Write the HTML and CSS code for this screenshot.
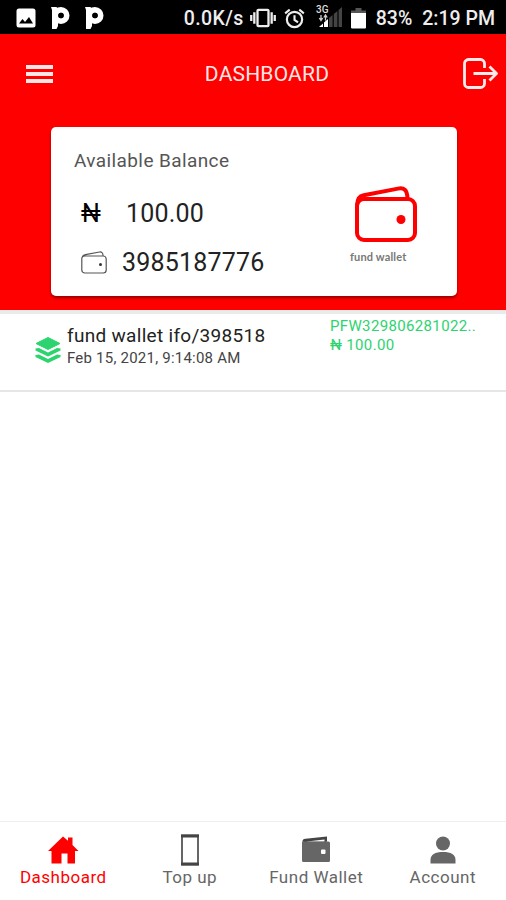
FILE: index.html
```
<!DOCTYPE html>
<html lang="en">
<head>
  <meta charset="UTF-8">
  <meta name="viewport" content="width=device-width, initial-scale=1.0">
  <title>Dashboard</title>
  <link rel="stylesheet" href="styles.css">
</head>
<body>
  <div class="app">
    <div class="status-bar">
      <svg class="icon-image" width="20" height="20" viewBox="0 0 20 20">
        <rect x="0.5" y="0.5" width="19" height="19" rx="2.5" fill="#fff"/>
        <path d="M3 15.500l3.500-4.500 2.500 3 4-5 4 6.500z" fill="#000"/>
      </svg>
      <svg class="icon-p" width="19" height="24" viewBox="0 0 19 24">
        <path d="M0 1h5.500l1.500 2v17l-1.500 3H1V4z" fill="#fff"/>
        <circle cx="10" cy="9.500" r="5.600" fill="none" stroke="#fff" stroke-width="5.800"/>
        <circle cx="10" cy="9.500" r="2.700" fill="#000"/>
      </svg>
      <svg class="icon-p" width="19" height="24" viewBox="0 0 19 24">
        <path d="M0 1h5.500l1.500 2v17l-1.500 3H1V4z" fill="#fff"/>
        <circle cx="10" cy="9.500" r="5.600" fill="none" stroke="#fff" stroke-width="5.800"/>
        <circle cx="10" cy="9.500" r="2.700" fill="#000"/>
      </svg>
      <span class="speed">0.0K/s</span>
      <svg class="icon-vibrate" width="26" height="20" viewBox="0 0 27 20">
        <rect x="7.800" y="1.500" width="11.400" height="17" rx="1" fill="none" stroke="#eee" stroke-width="2.400"/>
        <path d="M4.500 4v12M22.500 4v12M1.300 7v6M25.700 7v6" stroke="#eee" stroke-width="2.400"/>
      </svg>
      <svg class="icon-alarm" width="21" height="21" viewBox="0 0 22 22">
        <circle cx="11" cy="12" r="8" fill="none" stroke="#eee" stroke-width="2.300"/>
        <path d="M1.200 5.600L6 1.700M20.800 5.600L16 1.700M11 7.500v5l3.700 2.500" fill="none" stroke="#eee" stroke-width="2.200"/>
      </svg>
      <svg class="icon-signal" width="27" height="24" viewBox="0 0 27 24">
        <path d="M3 23l4-3.500V23z" fill="#fff"/>
        <path d="M8 18.500l4-3.500v8H8z" fill="#fff"/>
        <path d="M13 14l3.600-3v12H13zM17.800 10l3.600-3v16h-3.600zM22.600 6L26 3v20h-3.400z" fill="#444"/>
        <path d="M5 11v5M3.300 14L5 16.500 6.700 14M9.500 16.500v-5M7.800 13.500l1.700-2.500 1.700 2.500" fill="none" stroke="#ccc" stroke-width="1.300"/>
        <text x="0" y="8.500" class="network">3G</text>
      </svg>
      <svg class="icon-battery" width="15" height="21" viewBox="0 0 15 21">
        <path d="M4.500 0h6v2.500H15V5H0V2.500h4.500z" fill="#555"/>
        <path d="M0 5h15v14.500a1 1 0 0 1-1 1H1a1 1 0 0 1-1-1z" fill="#fff"/>
      </svg>
      <span class="percent">83%</span>
      <span class="time">2:19 PM</span>
    </div>

    <div class="header">
      <div class="toolbar">
        <svg class="icon-menu" width="27" height="20" viewBox="0 0 27 20">
          <path d="M0 3h27M0 10h27M0 17h27" stroke="#fff" stroke-opacity=".9" stroke-width="4"/>
        </svg>
        <h1 class="title">DASHBOARD</h1>
        <svg class="icon-logout" width="35" height="31" viewBox="0 0 35 31">
          <path d="M21.500 10V5.500a4 4 0 0 0-4-4h-12a4 4 0 0 0-4 4v20a4 4 0 0 0 4 4h12a4 4 0 0 0 4-4V21M10.500 15.500h22M26.500 8.500l7 7-7 7" fill="none" stroke="#fff" stroke-opacity=".92" stroke-width="2.800" stroke-linejoin="round"/>
        </svg>
      </div>

      <div class="card">
        <div class="balance">
          <div class="label">Available Balance</div>
          <div class="amount"><span class="naira">₦</span>100.00</div>
          <div class="account">
            <svg width="26" height="23" viewBox="0 0 26 23">
              <path d="M.8 8.500V19a3 3 0 0 0 3 3h18.400a3 3 0 0 0 3-3V8a3 3 0 0 0-3-3H4a3 3 0 0 0-3.200 3.500zM1.200 6.500C1.500 4.500 3 4 4.500 3.600L18.500 1c2-.3 3.500.8 3.600 3.800" fill="none" stroke="#555" stroke-width="1.200"/>
              <circle cx="19.500" cy="13.500" r="1.500" fill="#333"/>
            </svg>
            3985187776
          </div>
        </div>
        <div class="fund">
          <svg width="62" height="56" viewBox="0 0 62 56">
            <rect x="2" y="13" width="58" height="41" rx="7" fill="none" stroke="#f00" stroke-width="4"/>
            <path d="M2.200 19c0-6 1.500-8.800 6.500-9.700L43 2.600c6-1.200 9 1.200 9.500 9.400" fill="none" stroke="#f00" stroke-width="4"/>
            <circle cx="46" cy="33.500" r="4.500" fill="#f00"/>
          </svg>
          <div class="fund-label">fund wallet</div>
        </div>
      </div>
    </div>

    <div class="transaction">
      <svg class="icon-layers" width="26" height="26" viewBox="0 0 26 26">
        <path d="M13 0.500L25 6.500 13 12.500 1 6.500z" fill="#2dd36f" stroke="#2dd36f" stroke-linejoin="round"/>
        <path d="M.5 11.500l3.500-.6 9 4.500 9-4.500 3.500.6v2l-12.500 6-12.500-6zM.5 18l3.500-.6 9 4.500 9-4.500 3.500.6v2L13 26 .5 20z" fill="#2dd36f"/>
      </svg>
      <div class="details">
        <div class="name">fund wallet ifo/398518</div>
        <div class="date">Feb 15, 2021, 9:14:08 AM</div>
      </div>
      <div class="payment">
        <div class="reference">PFW329806281022..</div>
        <div class="price">₦ 100.00</div>
      </div>
    </div>

    <div class="tabs">
      <a class="tab active" href="#dashboard">
        <svg width="32" height="32" viewBox="0 0 32 32">
          <path d="M16 2.500l5 4.200V3.500h4.500v7.500L31.500 17H28v12.500h-7.500v-10h-6v10H4.500V17H1z" fill="currentColor"/>
        </svg>
        <span>Dashboard</span>
      </a>
      <a class="tab" href="#topup">
        <svg width="32" height="32" viewBox="0 0 32 32">
          <rect x="8" y="1.500" width="16" height="29" fill="none" stroke="#666" stroke-width="2"/>
          <path d="M7 2h18M7 30h18" stroke="#444" stroke-width="3"/>
        </svg>
        <span>Top up</span>
      </a>
      <a class="tab" href="#fund">
        <svg width="32" height="32" viewBox="0 0 32 32">
          <path d="M2.500 7.500c0-2 1-2.500 3-2.700L27 2.500v4.700L26 8H4z" fill="#444"/>
          <path d="M7 7.500L24.500 5.500V7.800H7z" fill="#fff"/>
          <path d="M2 7.500h26.500A1.500 1.500 0 0 1 30 9v17.500a1.500 1.500 0 0 1-1.500 1.500h-25A1.500 1.500 0 0 1 2 26.500z" fill="currentColor"/>
          <rect x="21" y="15.500" width="4.500" height="4.500" rx="1" fill="#fff"/>
        </svg>
        <span>Fund Wallet</span>
      </a>
      <a class="tab" href="#account">
        <svg width="32" height="32" viewBox="0 0 32 32">
          <circle cx="16" cy="9.500" r="7" fill="currentColor"/>
          <path d="M3.500 29.500V26C3.500 20.500 8 18 16 18s12.500 2.500 12.500 8v3.500z" fill="currentColor"/>
        </svg>
        <span>Account</span>
      </a>
    </div>
  </div>
</body>
</html>
```
FILE: styles.css
```
body {
  margin: 0;
  font-family: Roboto, "Liberation Sans", sans-serif;
  color: #222;
  background: #fff;
}

svg {
  display: block;
  flex: none;
}

.app {
  display: flex;
  flex-direction: column;
  height: 900px;
  overflow: hidden;
}

/* status bar */
.status-bar {
  display: flex;
  align-items: center;
  height: 34px;
  padding: 2px 11px 0 16px;
  box-sizing: border-box;
  background: #000;
  color: #eee;
  font-size: 19.5px;
  font-weight: 500;
  white-space: nowrap;
}

.icon-p {
  margin-left: 15px;
}

.speed {
  margin-left: auto;
  letter-spacing: .4px;
}

.icon-vibrate {
  margin-left: 6px;
}

.icon-alarm {
  margin-left: 8px;
}

.icon-signal {
  margin: -5px 0 0 11px;
}

.network {
  font-size: 10px;
  fill: #ddd;
}

.icon-battery {
  margin-left: 8px;
}

.percent {
  margin-left: 10px;
}

.time {
  margin-left: 10px;
}

/* red header */
.header {
  height: 276px;
  background: #f00;
}

.toolbar {
  display: flex;
  align-items: center;
  justify-content: space-between;
  height: 79px;
  padding: 0 8px 0 26px;
}

.title {
  margin: 0 0 0 18px;
  color: #fff;
  opacity: .9;
  font-size: 21px;
  font-weight: 400;
  letter-spacing: .2px;
}

.card {
  display: flex;
  justify-content: space-between;
  width: 406px;
  height: 169px;
  margin: 14px 0 0 51px;
  padding: 22px 40px 0 23px;
  box-sizing: border-box;
  border-radius: 5px;
  background: #fff;
  box-shadow: 0 2px 3px rgba(0, 0, 0, .4);
}

.label {
  color: #555;
  font-size: 19px;
  line-height: 24px;
  letter-spacing: .4px;
}

.amount {
  display: flex;
  align-items: center;
  height: 30px;
  margin-top: 25px;
  font-size: 25px;
  letter-spacing: .2px;
}

.naira {
  width: 46px;
  margin-right: 6px;
  padding-left: 7px;
  box-sizing: border-box;
  color: #000;
  font-size: 25px;
}

.account {
  display: flex;
  align-items: center;
  gap: 15px;
  height: 30px;
  margin-top: 19px;
  padding-left: 7px;
  font-size: 25px;
  letter-spacing: .2px;
}

.fund {
  padding-top: 37px;
}

.fund-label {
  margin-left: -5px;
  margin-top: 8px;
  color: #777;
  font-family: Lato, sans-serif;
  font-size: 11px;
  font-weight: bold;
  line-height: 14px;
  letter-spacing: .15px;
}

/* transaction row */
.transaction {
  display: flex;
  height: 82px;
  padding-left: 35px;
  box-sizing: border-box;
  border-top: 4px solid #ebebeb;
  border-bottom: 2px solid #e6e6e6;
}

.icon-layers {
  margin-top: 23px;
}

.details {
  width: 263px;
  padding: 10px 0 0 6px;
  box-sizing: border-box;
}

.name {
  font-size: 19px;
  line-height: 24px;
  letter-spacing: .3px;
}

.date {
  color: #444;
  font-size: 15px;
  line-height: 20px;
  letter-spacing: .22px;
}

.payment {
  padding: 3px 0 0 6px;
  color: #2dd36f;
  font-size: 15px;
  line-height: 19px;
  letter-spacing: .35px;
}

/* bottom tabs */
.tabs {
  display: flex;
  height: 79px;
  margin-top: auto;
  padding-top: 12px;
  box-sizing: border-box;
  border-top: 1px solid #eee;
}

.tab {
  display: flex;
  flex: 1;
  flex-direction: column;
  align-items: center;
  color: #666;
  font-size: 17px;
  line-height: 23px;
  letter-spacing: .5px;
  text-decoration: none;
}

.tab.active {
  color: #f00;
}
```
